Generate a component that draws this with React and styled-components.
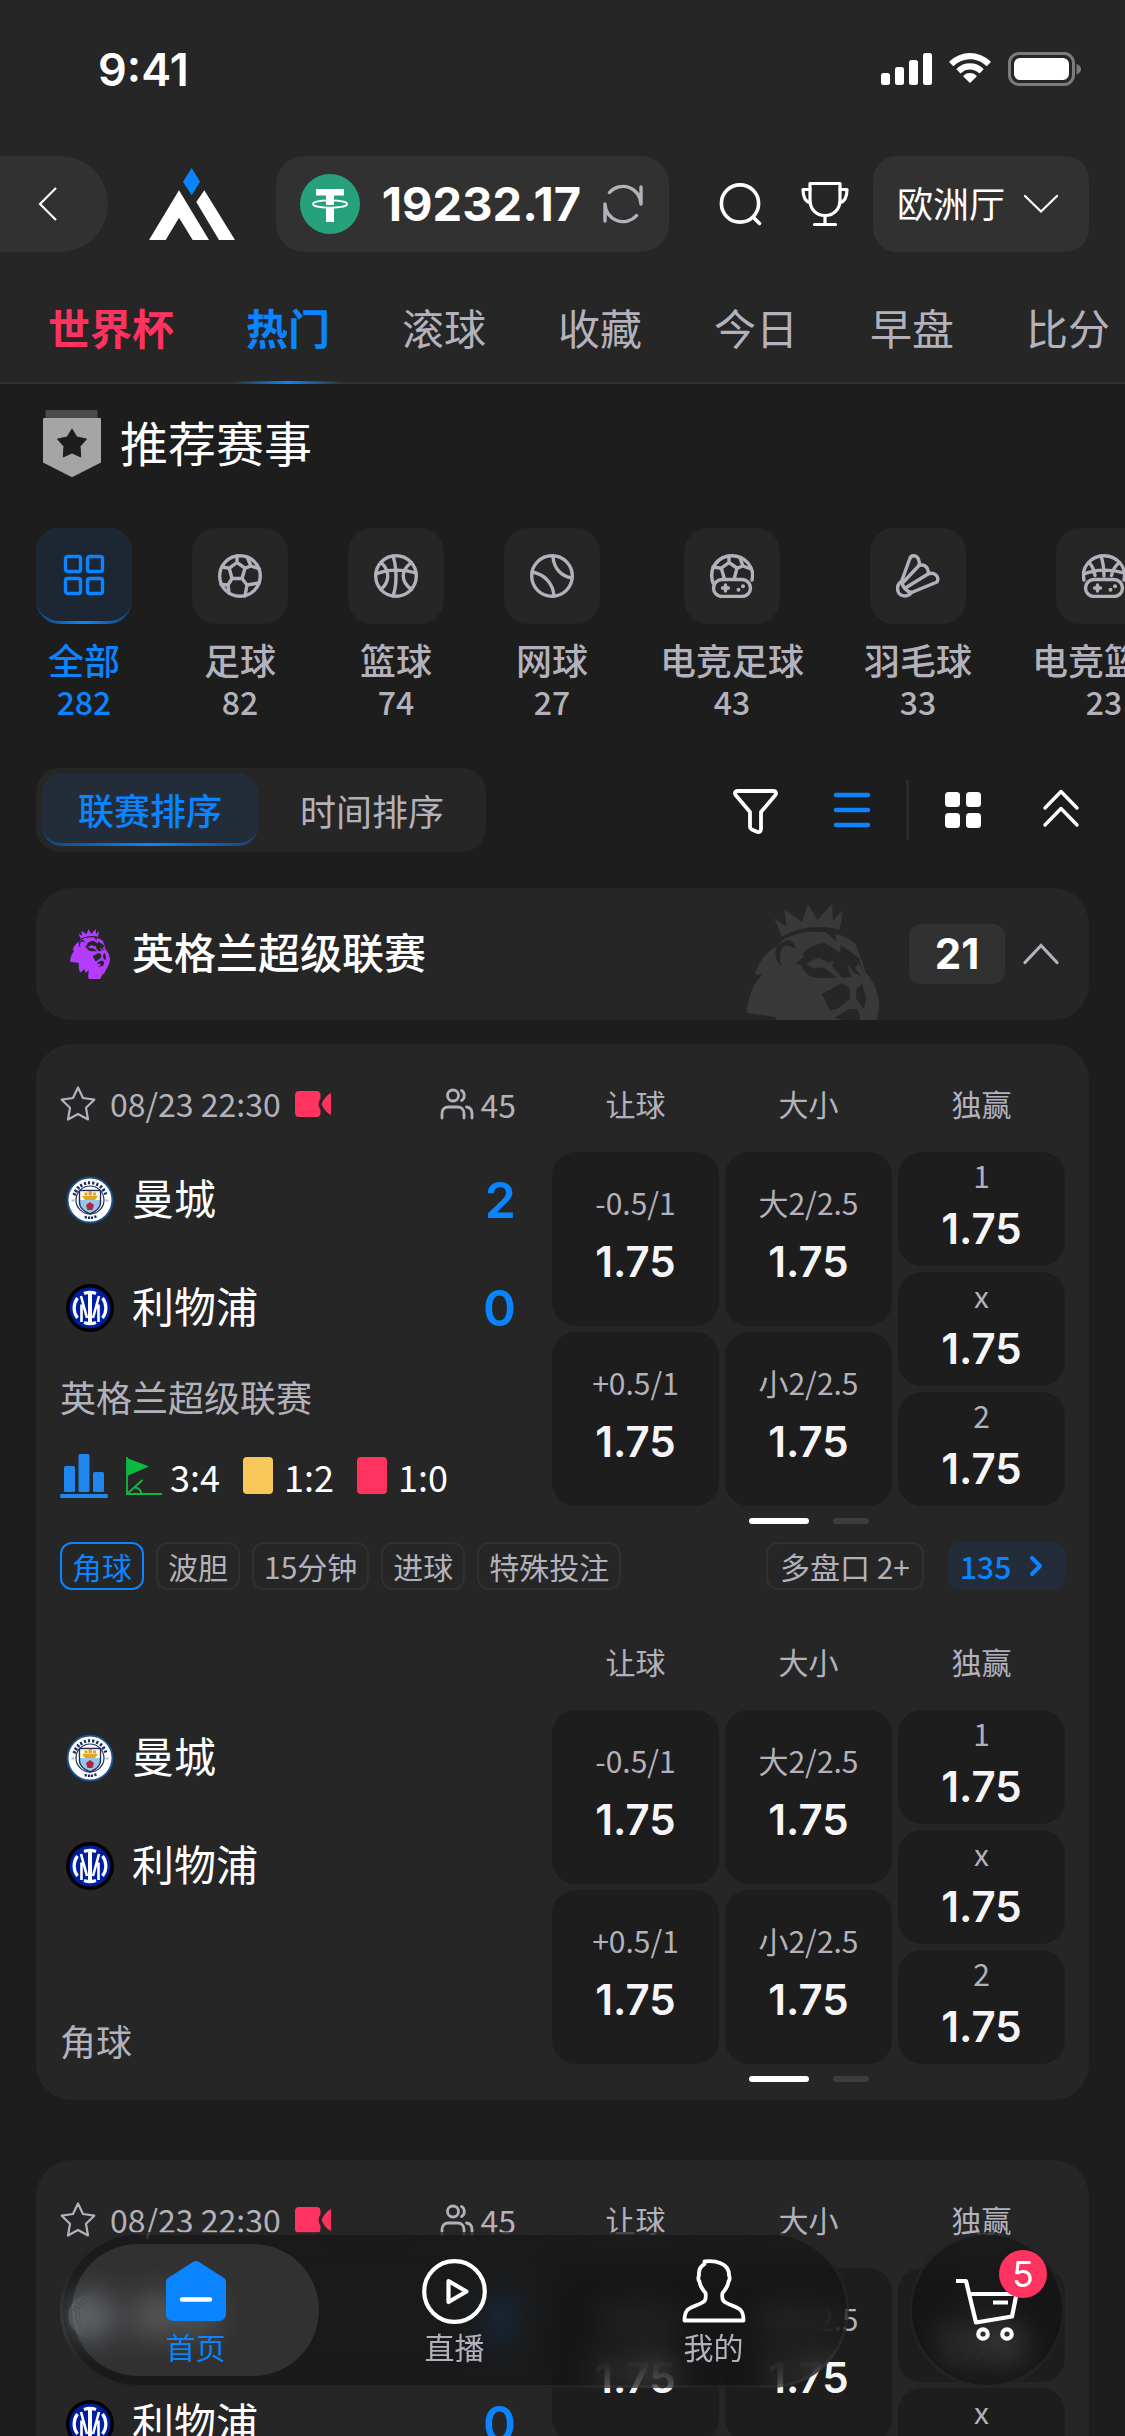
import { useState } from 'react';
import styled, { createGlobalStyle, css } from 'styled-components';

// colors
const BLUE = '#0a84ff';
const PINK = '#ff335f';
const GRAY = '#b3b2bc';
const CARD = '#262626';
const PAGE = '#1d1d1d';
const LIFTED = '#313131';

const GlobalStyle = createGlobalStyle`
    * {
        box-sizing: border-box;
    }
    body {
        margin: 0;
        background: ${PAGE};
        color: #fff;
        font-family: "Noto Sans CJK SC", "Noto Sans", sans-serif;
    }
    button, select {
        margin: 0;
        padding: 0;
        border: 0;
        background: none;
        color: inherit;
        font: inherit;
        cursor: pointer;
    }
    svg {
        display: block;
        flex: none;
    }
`;

// 숫자용 폰트
const digits = css`
    font-family: Inter, "Liberation Sans", sans-serif;
`;

const tabs = ['世界杯', '热门', '滚球', '收藏', '今日', '早盘', '比分'];

const sports = [
    { name: '全部', count: 282, icon: AllIcon },
    { name: '足球', count: 82, icon: SoccerIcon },
    { name: '篮球', count: 74, icon: BasketballIcon },
    { name: '网球', count: 27, icon: TennisIcon },
    { name: '电竞足球', count: 43, icon: ESoccerIcon },
    { name: '羽毛球', count: 33, icon: BadmintonIcon },
    { name: '电竞篮球', count: 23, icon: EBasketballIcon },
];

const columns = [
    { title: '让球', odds: [['-0.5/1', '1.75'], ['+0.5/1', '1.75']] },
    { title: '大小', odds: [['大2/2.5', '1.75'], ['小2/2.5', '1.75']] },
    { title: '独赢', odds: [['1', '1.75'], ['x', '1.75'], ['2', '1.75']] },
];

const chips = ['角球', '波胆', '15分钟', '进球', '特殊投注'];

const navItems = [
    { name: '首页', icon: HomeIcon },
    { name: '直播', icon: LiveIcon },
    { name: '我的', icon: UserIcon },
];

export default function App() {
    return (
        <>
            <GlobalStyle />
            <Screen>
                <Header />
                <Content>
                    <SectionTitle>
                        <BadgeIcon />
                        推荐赛事
                    </SectionTitle>
                    <Sports />
                    <SortBar />
                    <League />
                    <MatchCard />
                    <MatchCard />
                </Content>
                <BottomBar />
            </Screen>
        </>
    );
}

const Screen = styled.div`
    position: relative;
    display: flex;
    flex-direction: column;
    height: 100vh;
    overflow: hidden;
`;

const Content = styled.main`
    flex: 1;
    min-height: 0;
    overflow-x: hidden;
    overflow-y: auto;
    scrollbar-width: none;
    padding: 24px 0 0 36px;
`;

const SectionTitle = styled.h1`
    display: flex;
    align-items: flex-start;
    gap: 12px;
    height: 72px;
    margin: 0;
    font-size: 48px;
    font-weight: 400;
    line-height: 66px;
`;

/* ---------- header ---------- */

const Top = styled.header`
    background: ${CARD};
`;

const StatusBar = styled.div`
    ${digits}
    display: flex;
    align-items: center;
    justify-content: space-between;
    height: 138px;
    padding: 0 44px 0 98px;
    font-size: 45px;
    font-weight: 600;
`;

const Toolbar = styled.div`
    display: flex;
    align-items: center;
    height: 96px;
    margin-top: 18px;
    padding-right: 36px;
`;

const BackButton = styled.button`
    display: flex;
    align-items: center;
    width: 108px;
    height: 96px;
    padding-left: 36px;
    border-radius: 0 48px 48px 0;
    background: ${LIFTED};
`;

const LogoLink = styled.a`
    margin: 0 40px;
`;

const Wallet = styled.div`
    display: flex;
    flex: 1;
    align-items: center;
    justify-content: space-between;
    height: 96px;
    padding: 0 26px 0 24px;
    border-radius: 28px;
    background: ${LIFTED};
`;

const Balance = styled.span`
    ${digits}
    font-size: 47px;
    font-weight: 700;
    line-height: 72px;
`;

const Tools = styled.div`
    display: flex;
    gap: 36px;
    margin: 0 24px 0 48px;
`;

const HallBox = styled.label`
    display: flex;
    align-items: center;
    justify-content: space-between;
    width: 216px;
    height: 96px;
    padding: 0 30px 0 24px;
    border-radius: 24px;
    background: ${LIFTED};
`;

const HallSelect = styled.select`
    appearance: none;
    outline: none;
    width: 112px;
    padding-bottom: 4px;
    font-size: 36px;
    line-height: 52px;
`;

const Tabs = styled.nav`
    display: flex;
    gap: 72px;
    height: 110px;
    margin-top: 22px;
    padding-left: 48px;
    box-shadow: inset 0 -2px #333;
    overflow: hidden;
`;

const Tab = styled.button`
    position: relative;
    flex: none;
    padding-bottom: 4px;
    font-size: 42px;
    line-height: 106px;
    color: ${props => (props.$hot ? PINK : props.$active ? BLUE : GRAY)};
    font-weight: ${props => (props.$hot || props.$active ? 700 : 400)};

    ${props => props.$active && css`
        &::after {
            content: '';
            position: absolute;
            left: -12px;
            right: -12px;
            bottom: 0;
            height: 3px;
            background: linear-gradient(90deg, transparent, ${BLUE}, transparent);
        }
    `}
`;

function Header() {
    const [active, setActive] = useState('热门');

    return (
        <Top>
            <StatusBar>
                <span>9:41</span>
                <StatusIcons />
            </StatusBar>
            <Toolbar>
                <BackButton aria-label="返回">
                    <svg width="24" height="36" viewBox="0 0 24 36" fill="none" stroke="#fff" strokeWidth="2.2">
                        <path d="M20 2 4 18l16 16" />
                    </svg>
                </BackButton>
                <LogoLink href="#" aria-label="主页">
                    <Logo />
                </LogoLink>
                <Wallet>
                    <CoinIcon />
                    <Balance>19232.17</Balance>
                    <button aria-label="刷新"><RefreshIcon /></button>
                </Wallet>
                <Tools>
                    <button aria-label="搜索">
                        <svg width="48" height="48" viewBox="0 0 48 48" fill="none" stroke="#fff" strokeWidth="3.6" strokeLinecap="round">
                            <circle cx="23" cy="23.5" r="18.6" />
                            <path d="m36.5 37.5 6 6" />
                        </svg>
                    </button>
                    <button aria-label="奖杯"><TrophyIcon /></button>
                </Tools>
                <HallBox>
                    <HallSelect aria-label="大厅" defaultValue="欧洲厅">
                        <option>欧洲厅</option>
                        <option>亚洲厅</option>
                    </HallSelect>
                    <svg width="36" height="20" viewBox="0 0 36 20" fill="none" stroke="#fff" strokeWidth="2.2" strokeLinecap="round">
                        <path d="m2 2 16 15.500L34 2" />
                    </svg>
                </HallBox>
            </Toolbar>
            <Tabs>
                {tabs.map((name, i) => (
                    <Tab key={name} $hot={i === 0} $active={name === active} onClick={() => setActive(name)}>
                        {name}
                    </Tab>
                ))}
            </Tabs>
        </Top>
    );
}

/* ---------- sports ---------- */

const SportList = styled.div`
    display: flex;
    gap: 60px;
    margin-top: 48px;
    padding-bottom: 10px;
    overflow: hidden;
`;

// 선택된 타일 아래쪽의 그라데이션 라인
const glowLine = fill => css`
    border-bottom: 3px solid transparent;
    background:
        linear-gradient(${fill}, ${fill}) padding-box,
        linear-gradient(90deg, #15456f, ${BLUE}, #15456f) border-box;
`;

const SportTile = styled.span`
    display: flex;
    align-items: center;
    justify-content: center;
    width: 96px;
    height: 96px;
    margin-bottom: 14px;
    border-radius: 24px;
    background: ${CARD};
    ${props => props.$active && glowLine('#1c2733')}
`;

const SportButton = styled.button`
    display: flex;
    flex: none;
    flex-direction: column;
    align-items: center;
    font-size: 36px;
    font-weight: 500;
    line-height: 42px;
    color: ${props => (props.$active ? BLUE : GRAY)};
`;

const SportCount = styled.span`
    font-size: 32px;
    line-height: 42px;
`;

function Sports() {
    const [active, setActive] = useState('全部');

    return (
        <SportList>
            {sports.map(({ name, count, icon: Icon }) => (
                <SportButton key={name} $active={name === active} onClick={() => setActive(name)}>
                    <SportTile $active={name === active}><Icon /></SportTile>
                    <span>{name}</span>
                    <SportCount>{count}</SportCount>
                </SportButton>
            ))}
        </SportList>
    );
}

/* ---------- sorting ---------- */

const SortRow = styled.div`
    display: flex;
    align-items: center;
    justify-content: space-between;
    margin: 36px 40px 0 0;
`;

const Segment = styled.div`
    display: flex;
    gap: 6px;
    padding: 6px;
    border-radius: 24px;
    background: ${CARD};
`;

const SegmentButton = styled.button`
    width: 216px;
    height: 72px;
    border-radius: 20px;
    font-size: 36px;
    line-height: 66px;
    color: ${props => (props.$active ? BLUE : GRAY)};
    font-weight: ${props => (props.$active ? 500 : 400)};
    ${props => props.$active && glowLine('#232d3a')}
`;

const ViewTools = styled.div`
    display: flex;
    align-items: center;
    gap: 50px;
`;

const ViewPair = styled.div`
    display: flex;
    align-items: center;
    gap: 30px;
`;

const Divider = styled.span`
    width: 3px;
    height: 60px;
    background: #2a2a2a;
`;

function SortBar() {
    const [sort, setSort] = useState('联赛排序');

    return (
        <SortRow>
            <Segment>
                {['联赛排序', '时间排序'].map(name => (
                    <SegmentButton key={name} $active={name === sort} onClick={() => setSort(name)}>
                        {name}
                    </SegmentButton>
                ))}
            </Segment>
            <ViewTools>
                <button aria-label="筛选">
                    <svg width="48" height="48" viewBox="0 0 48 48" fill="none" stroke="#fff" strokeWidth="3.8" strokeLinejoin="round">
                        <path d="M7.500 5h36c2.400 0 3.200 2.600 1.700 4.300L31 26v17c0 2.600-2 3.600-4 2.800l-5.200-2.300c-1.200-.6-1.800-1.400-1.800-2.800V26L5.800 9.300C4.300 7.600 5.100 5 7.500 5Z" />
                    </svg>
                </button>
                <ViewPair>
                    <button aria-label="列表">
                        <svg width="48" height="48" viewBox="0 0 48 48" stroke={BLUE} strokeWidth="4.400" strokeLinecap="round">
                            <path d="M8 9h32M8 24h32M8 39h32" />
                        </svg>
                    </button>
                    <Divider />
                    <button aria-label="网格">
                        <svg width="48" height="48" viewBox="0 0 48 48" fill="#fff">
                            <rect x="6" y="6" width="15" height="15" rx="3.500" />
                            <rect x="27" y="6" width="15" height="15" rx="3.500" />
                            <rect x="6" y="27" width="15" height="15" rx="3.500" />
                            <rect x="27" y="27" width="15" height="15" rx="3.500" />
                        </svg>
                    </button>
                </ViewPair>
                <button aria-label="收起全部">
                    <svg width="48" height="48" viewBox="0 0 48 48" fill="none" stroke="#fff" strokeWidth="3.400" strokeLinecap="round" strokeLinejoin="round">
                        <path d="M8 22 24 5.500 40 22M8 39l16-16.500L40 39" />
                    </svg>
                </button>
            </ViewTools>
        </SortRow>
    );
}

/* ---------- league ---------- */

const LeagueCard = styled.section`
    display: flex;
    align-items: center;
    height: 132px;
    margin: 36px 36px 0 0;
    padding: 0 30px 0 34px;
    border-radius: 36px;
    background: ${CARD};
    overflow: hidden;
`;

const LeagueName = styled.h2`
    flex: 1;
    margin: 0 0 0 22px;
    padding-bottom: 6px;
    font-size: 42px;
    font-weight: 500;
    line-height: 60px;
`;

const Watermark = styled.div`
    align-self: flex-start;
    margin: 16px 30px 0 0;
`;

const LeagueCount = styled.span`
    ${digits}
    width: 96px;
    margin-right: 18px;
    border-radius: 12px;
    background: ${LIFTED};
    font-size: 42px;
    font-weight: 700;
    line-height: 60px;
    text-align: center;
`;

function League() {
    return (
        <LeagueCard>
            <Lion width={40} color="#b43cff" />
            <LeagueName>英格兰超级联赛</LeagueName>
            <Watermark><Lion width={132} color="#393939" /></Watermark>
            <LeagueCount>21</LeagueCount>
            <button aria-label="收起">
                <svg width="36" height="22" viewBox="0 0 36 22" fill="none" stroke={GRAY} strokeWidth="3.200" strokeLinecap="round">
                    <path d="M2 19.500 18 2.500l16 17" />
                </svg>
            </button>
        </LeagueCard>
    );
}

/* ---------- match ---------- */

const Card = styled.article`
    margin: 24px 36px 60px 0;
    padding: 36px 24px 0;
    border-radius: 36px;
    background: ${CARD};

    & + & {
        margin-top: 0;
    }
`;

const Market = styled.section`
    display: grid;
    grid-template-columns: 456fr 513fr;
    column-gap: 36px;
`;

const Side = styled.div`
    display: grid;
    grid-template-rows: 48px 354px;
    row-gap: 24px;
`;

const Meta = styled.div`
    display: flex;
    align-items: center;
    font-size: 32px;
    line-height: 48px;
    color: ${GRAY};
`;

const Time = styled.time`
    margin: 0 14px;
    padding-bottom: 2px;
`;

const Viewers = styled.span`
    display: flex;
    align-items: center;
    gap: 6px;
    margin-left: auto;
`;

const Teams = styled.div`
    display: flex;
    flex-direction: column;
`;

const TeamRow = styled.div`
    display: flex;
    align-items: center;
    gap: 18px;
    height: 96px;
    margin-bottom: 12px;
    padding-left: 6px;
`;

const TeamName = styled.span`
    padding-bottom: 6px;
    font-size: 42px;
    line-height: 60px;
`;

const Score = styled.strong`
    ${digits}
    margin-left: auto;
    font-size: 50px;
    font-weight: 600;
    line-height: 60px;
    color: ${BLUE};
`;

const Competition = styled.div`
    margin-top: ${props => (props.$last ? 'auto' : '4px')};
    font-size: 36px;
    line-height: 48px;
    color: ${GRAY};
`;

const Stats = styled.div`
    display: flex;
    align-items: center;
    height: 48px;
    margin-top: 32px;
    font-size: 36px;
    line-height: 48px;
`;

const Stat = styled.span`
    display: flex;
    align-items: center;
    gap: 8px;
    margin-right: 20px;
`;

const ChartLink = styled.button`
    margin-right: 18px;
`;

const OddsHead = styled.div`
    display: grid;
    grid-template-columns: repeat(3, 1fr);
    gap: 6px;
    font-size: 30px;
    line-height: 46px;
    text-align: center;
    color: ${GRAY};
`;

const OddsGrid = styled.div`
    display: grid;
    grid-template-columns: repeat(3, 1fr);
    grid-template-rows: 100%;
    gap: 6px;
`;

const OddsColumn = styled.div`
    display: flex;
    flex-direction: column;
    gap: 6px;
    min-height: 0;
`;

const Odd = styled.button`
    display: flex;
    flex: 1 1 0;
    flex-direction: column;
    align-items: center;
    justify-content: center;
    gap: ${props => (props.$tight ? '2px' : '8px')};
    min-height: 0;
    padding-bottom: 6px;
    border-radius: 24px;
    background: ${PAGE};
`;

const OddLabel = styled.span`
    font-size: 30px;
    line-height: 44px;
    color: ${GRAY};
`;

const OddValue = styled.span`
    ${digits}
    font-size: 42px;
    font-weight: 600;
    line-height: 60px;
    color: #f5f5f7;
`;

const Pager = styled.div`
    display: flex;
    justify-content: center;
    gap: 24px;
    padding: 12px 0 18px;
`;

const Dot = styled.span`
    width: ${props => (props.$active ? '60px' : '36px')};
    height: 6px;
    border-radius: 3px;
    background: ${props => (props.$active ? '#fff' : '#3d3d3d')};
`;

const ChipRow = styled.div`
    display: flex;
    gap: 12px;
    margin-bottom: 48px;
`;

const Chip = styled.button`
    height: 48px;
    padding: 0 ${props => (props.$wide ? '12px' : '10px')};
    border: 2px solid ${props => (props.$active ? BLUE : '#303030')};
    border-radius: 12px;
    font-size: 30px;
    line-height: 42px;
    white-space: nowrap;
    color: ${props => (props.$active ? BLUE : GRAY)};
`;

const MultiChip = styled(Chip)`
    margin-left: auto;
`;

const MoreLink = styled.a`
    display: flex;
    align-items: center;
    justify-content: space-between;
    width: 117px;
    height: 48px;
    margin-left: 12px;
    padding: 0 22px 0 12px;
    border-radius: 12px;
    background: #232d3a;
    font-size: 30px;
    font-weight: 500;
    line-height: 44px;
    text-decoration: none;
    color: ${BLUE};
`;

function MarketOdds() {
    return (
        <div>
            <Side>
                <OddsHead>
                    {columns.map(({ title }) => <span key={title}>{title}</span>)}
                </OddsHead>
                <OddsGrid>
                    {columns.map(({ title, odds }) => (
                        <OddsColumn key={title}>
                            {odds.map(([label, value]) => (
                                <Odd key={label} $tight={odds.length > 2}>
                                    <OddLabel>{label}</OddLabel>
                                    <OddValue>{value}</OddValue>
                                </Odd>
                            ))}
                        </OddsColumn>
                    ))}
                </OddsGrid>
            </Side>
            <Pager>
                <Dot $active />
                <Dot />
            </Pager>
        </div>
    );
}

function MatchCard() {
    const [chip, setChip] = useState('角球');

    return (
        <Card>
            <Market>
                <Side>
                    <Meta>
                        <button aria-label="收藏"><StarIcon /></button>
                        <Time>08/23 22:30</Time>
                        <CameraIcon />
                        <Viewers><ViewersIcon />45</Viewers>
                    </Meta>
                    <Teams>
                        <TeamRow><CityCrest /><TeamName>曼城</TeamName><Score>2</Score></TeamRow>
                        <TeamRow><InterCrest /><TeamName>利物浦</TeamName><Score>0</Score></TeamRow>
                        <Competition>英格兰超级联赛</Competition>
                        <Stats>
                            <ChartLink aria-label="数据"><ChartIcon /></ChartLink>
                            <Stat><CornerIcon />3:4</Stat>
                            <Stat><BookingIcon color="#f7c859" />1:2</Stat>
                            <Stat><BookingIcon color={PINK} />1:0</Stat>
                        </Stats>
                    </Teams>
                </Side>
                <MarketOdds />
            </Market>
            <ChipRow>
                {chips.map(name => (
                    <Chip key={name} $active={name === chip} onClick={() => setChip(name)}>{name}</Chip>
                ))}
                <MultiChip $wide>多盘口 2+</MultiChip>
                <MoreLink href="#">
                    135
                    <svg width="14" height="22" viewBox="0 0 14 22" fill="none" stroke={BLUE} strokeWidth="4" strokeLinecap="round" strokeLinejoin="round">
                        <path d="m3 3 8 8-8 8" />
                    </svg>
                </MoreLink>
            </ChipRow>
            <Market>
                <Side>
                    <Meta />
                    <Teams>
                        <TeamRow><CityCrest /><TeamName>曼城</TeamName></TeamRow>
                        <TeamRow><InterCrest /><TeamName>利物浦</TeamName></TeamRow>
                        <Competition $last>角球</Competition>
                    </Teams>
                </Side>
                <MarketOdds />
            </Market>
        </Card>
    );
}

/* ---------- bottom bar ---------- */

const Bottom = styled.div`
    position: absolute;
    left: 60px;
    right: 60px;
    bottom: 48px;
    display: flex;
    gap: 60px;
`;

const glass = css`
    height: 156px;
    border: 3px solid rgba(255, 255, 255, 0.05);
    border-radius: 78px;
    background: rgba(14, 14, 14, 0.5);
    backdrop-filter: blur(16px);
`;

const Nav = styled.nav`
    ${glass}
    display: flex;
    flex: 1;
    gap: 12px;
    padding: 9px;
`;

const NavLink = styled.a`
    display: flex;
    flex: 1;
    flex-direction: column;
    align-items: center;
    padding-top: 14px;
    border-radius: 66px;
    background: ${props => (props.$active ? 'rgba(255, 255, 255, 0.1)' : 'none')};
    color: ${props => (props.$active ? BLUE : GRAY)};
    font-size: 30px;
    line-height: 44px;
    text-decoration: none;
`;

const NavIcon = styled.span`
    display: flex;
    align-items: center;
    justify-content: center;
    height: 66px;
`;

const CartButton = styled.button`
    ${glass}
    position: relative;
    display: flex;
    align-items: center;
    justify-content: center;
    width: 156px;
`;

const CartBadge = styled.span`
    ${digits}
    position: absolute;
    top: 15px;
    right: 15px;
    width: 48px;
    height: 48px;
    border-radius: 24px;
    background: ${PINK};
    font-size: 36px;
    line-height: 48px;
`;

function BottomBar() {
    return (
        <Bottom>
            <Nav>
                {navItems.map(({ name, icon: Icon }, i) => (
                    <NavLink key={name} href="#" $active={i === 0}>
                        <NavIcon><Icon /></NavIcon>
                        {name}
                    </NavLink>
                ))}
            </Nav>
            <CartButton aria-label="购物车">
                <CartIcon />
                <CartBadge>5</CartBadge>
            </CartButton>
        </Bottom>
    );
}

/* ---------- icons ---------- */

function StatusIcons() {
    return (
        <svg width="200" height="34" viewBox="0 0 200 34" fill="#fff">
            <rect x="0" y="21" width="9" height="12" rx="2.500" />
            <rect x="14" y="15" width="9" height="18" rx="2.500" />
            <rect x="28" y="8" width="9" height="25" rx="2.500" />
            <rect x="42" y="1" width="9" height="32" rx="2.500" />
            <path d="M89 7.200c6 0 11.700 2.300 16 6.500.4.300.9.300 1.200 0l3.200-3.200c.4-.4.4-1 0-1.300a29.500 29.500 0 0 0-40.800 0c-.4.300-.4.900 0 1.300l3.200 3.200c.3.300.8.300 1.200 0A23 23 0 0 1 89 7.200Z" />
            <path d="M89 17.600c3.300 0 6.400 1.200 8.800 3.400.4.300.9.300 1.200 0l3.200-3.200c.4-.4.4-1 0-1.300a19.300 19.300 0 0 0-26.400 0c-.4.300-.4.900 0 1.300l3.200 3.200c.3.300.8.300 1.200 0a13 13 0 0 1 8.800-3.400Z" />
            <path d="M95.400 24.700c.4-.4.400-1 0-1.300a9.900 9.900 0 0 0-12.800 0c-.4.300-.4.900 0 1.300l5.800 5.900c.3.300.9.300 1.200 0Z" />
            <rect x="128.500" y="1.500" width="64" height="31" rx="9.500" fill="none" stroke="#fff" strokeOpacity=".4" strokeWidth="3" />
            <rect x="133" y="6" width="55" height="22" rx="6" />
            <path d="M195.500 12c3 1 4.500 2.800 4.500 5.200s-1.500 4.200-4.500 5.200Z" opacity=".4" />
        </svg>
    );
}

function Logo() {
    return (
        <svg width="88" height="72" viewBox="0 0 88 72">
            <path d="m43.700 0 8.300 13.700-8.300 13.600L35 13.700Z" fill={BLUE} />
            <path d="m31 22.300 30 49.700H44.700L31 49.700 17.700 72H1ZM56.300 22.300 87 72H71L48.300 34Z" fill="#fff" />
        </svg>
    );
}

function CoinIcon() {
    return (
        <svg width="60" height="60" viewBox="0 0 60 60">
            <circle cx="30" cy="30" r="30" fill="#26a17b" />
            <path d="M16 15h28v6.500H34v9.500h-8v-9.500H16ZM26 34h8v14h-8Z" fill="#fff" />
            <ellipse cx="30" cy="30" rx="17" ry="3.600" fill="none" stroke="#fff" strokeWidth="1.800" />
        </svg>
    );
}

function RefreshIcon() {
    return (
        <svg width="40" height="40" viewBox="0 0 40 40" fill="none" stroke={GRAY} strokeWidth="3.400" strokeLinecap="round" strokeLinejoin="round">
            <path d="M6.500 8.500A18 18 0 0 1 38 20V3" />
            <path d="M33.500 31.500A18 18 0 0 1 2 20v17" />
        </svg>
    );
}

function TrophyIcon() {
    return (
        <svg width="48" height="48" viewBox="0 0 48 48" fill="none" stroke="#fff" strokeWidth="3.200" strokeLinecap="round" strokeLinejoin="round">
            <path d="M9 3.500h30V20c0 9-6 15.500-15 15.500S9 29 9 20ZM24 35.500v9M13.500 44.500h21" />
            <path d="M9 9.500H2c0 7 1.500 12 7.500 13.500M39 9.500h7c0 7-1.500 12-7.500 13.500" />
        </svg>
    );
}

function BadgeIcon() {
    return (
        <svg width="72" height="72" viewBox="0 0 72 72">
            <path d="M11 2h49a1.500 1.500 0 0 1 1.500 1.500V12h-52V3.500A1.500 1.500 0 0 1 11 2Z" fill="#4b4b4b" />
            <path d="M8.500 10h55c1 0 1.500.5 1.500 1.500v43L37.500 68.500c-1 .5-2 .5-3 0L7 54.500v-43c0-1 .5-1.500 1.500-1.500Z" fill="#a5a5a5" />
            <path d="m36 21 4.800 8 9.700 2-6.500 7.500.8 10.500-8.800-4-8.800 4 .8-10.500-6.500-7.500 9.700-2Z" fill={PAGE} stroke={PAGE} strokeLinejoin="round" />
        </svg>
    );
}

const LineSvg = styled.svg.attrs({ viewBox: '0 0 44 44', width: 44, height: 44 })`
    fill: none;
    stroke: currentColor;
    stroke-width: 3.4;
    stroke-linecap: round;
    stroke-linejoin: round;
`;

function AllIcon() {
    return (
        <LineSvg>
            <rect x="3.500" y="3.500" width="15" height="15" rx="2" />
            <rect x="25.500" y="3.500" width="15" height="15" rx="2" />
            <rect x="3.500" y="25.500" width="15" height="15" rx="2" />
            <rect x="25.500" y="25.500" width="15" height="15" rx="2" />
        </LineSvg>
    );
}

function SoccerIcon() {
    return (
        <LineSvg>
            <circle cx="22" cy="22" r="20.300" />
            <path d="m19 8.500 8 5.700-3 10.300H14l-2.700-10.300ZM19 8.500V2M11.300 14.200 4 13M27 14.200l6-2.200 8.500 3M33 12l-3.500-8M14 24.500 10 31l-7-.5M10 31l1 8M24 24.500l5 6.500 12-2M29 31l-2 11" />
        </LineSvg>
    );
}

function BasketballIcon() {
    return (
        <LineSvg>
            <circle cx="22" cy="22" r="20.300" />
            <path d="M19 2c4 12 4 29 0 40M2 20c12-5 28-5 40-1M7 8.500c9 8 9 19 0 27M37.500 8.500c-11 8-11 19 0 27" />
        </LineSvg>
    );
}

function TennisIcon() {
    return (
        <LineSvg>
            <circle cx="22" cy="22" r="20.300" />
            <path d="M23 2c.5 12 8 20.500 19 22M2 18c12 2 21 11 22 24" />
        </LineSvg>
    );
}

// 게임패드 (电竞 아이콘 공통)
function Gamepad() {
    return (
        <>
            <rect x="3.500" y="25.500" width="37" height="17" rx="8.500" />
            <path d="M12.500 34h6M15.500 31v6" />
            <circle cx="28.500" cy="35.700" r="2" fill="currentColor" stroke="none" />
            <circle cx="33" cy="32.300" r="2" fill="currentColor" stroke="none" />
        </>
    );
}

function ESoccerIcon() {
    return (
        <LineSvg>
            <path d="M3 29C-2 13 9 1.700 22 1.700S45 13 42 26" />
            <path d="m19 8.500 8 5.700-2.500 9.300M14 23.500l-2.700-9.300L19 8.500V2M11.300 14.200 3 13M27 14.200l6-2.200 8 3M33 12l-3-8" />
            <Gamepad />
        </LineSvg>
    );
}

function EBasketballIcon() {
    return (
        <LineSvg>
            <path d="M2 26C-1 13 9 1.700 22 1.700S45 13 42 26" />
            <path d="M19 2c2 6 3 13 3 20M2 20c12-5 28-5 40-1M7 8.500c3 3 5 6 6 13M37.500 8.500c-4 3-7 7-8 13" />
            <Gamepad />
        </LineSvg>
    );
}

function BadmintonIcon() {
    return (
        <LineSvg>
            <path d="m5.500 27.500 8-22c1.500-5.500 8-5 9.500 1.500.5 1.500.5 3 0 4.500 6-2 10.500 3 9 8.500 6-2.500 12 2.500 9 8L15.500 38.500" />
            <path d="M5.500 27.500C0 31 .5 38.500 5 41c4 2 8.500.5 10.500-2.500-4.500-1-8.500-5-10-11ZM7.500 28 23 11.500M11 33l21-13" />
        </LineSvg>
    );
}

function Lion({ width, color }) {
    return (
        <svg width={width} height={Math.round(width * 1.26)} viewBox="0 0 132 166" fill={color}>
            <path d="m27 14.300 12.300 8-1.800-16.600 17.300 12L60.900 0l9.400 16L85 0l1 16.700 9.900-10.400L92.600 26c-17-5-39-4-57.300 6.700Z" />
            <path d="M36 36c12-7 28-10 43-7.700L89 37l-.4-7.300c8 2 15 5 20.200 10.300l7.200 20 2 7.700c8 9 14 20 14 33.300 0 12-5 24-13 33l2-2-9 18-3-2-9 17c-10 4-26 4-38 1-4-8-1-20 0-30l-10 10-5-12-14 11c-4-10-5-22-4-32L0 109c0-14 6-29 15-38l-7-.7c4-13 11-22 21.500-28Z" />
            <g fill={CARD}>
                <path d="M29.500 42c-2.500 10-.5 16 5.500 20.300-4-10.300-2-20.300 5-20.700l9 2.700c-1-4.300-4-8-9-8.600Z" />
                <path d="m48 60 9.600-8-2.100-2c4.500-7 14.500-10 22-11L93 48.500l.7-7.500L112 54l5 17-5-12-4 5 6 8-8-4-6-9 4 14-9 1-10-12 2-6-5 2.500-11-5-12 6.500 7 4 11-.5L90 74H70c-10-1-14-8-16-13Z" />
                <path d="m75 90 19.400-10.700 8.600 4.700v11l-13 10-7 1.300ZM109.500 85l5.500-5 4 13-2 12-8-10ZM87 114l14.600-9h8l4 8-4 9-16 4 9-9Z" />
            </g>
        </svg>
    );
}

function StarIcon() {
    return (
        <svg width="36" height="36" viewBox="0 0 36 36" fill="none" stroke={GRAY} strokeWidth="2.200" strokeLinejoin="round">
            <path d="m18 1.500 5 10.500 11.300 1.700-8.300 8 2 11.800-10-5.500-10 5.500 2-11.800-8.300-8L13 12Z" />
        </svg>
    );
}

function CameraIcon() {
    return (
        <svg width="36" height="26" viewBox="0 0 36 26" fill={PINK}>
            <path d="M4 0h17.500a4 4 0 0 1 4 4v3.500c-2.500 4-2.500 7 0 11V22a4 4 0 0 1-4 4H4a4 4 0 0 1-4-4V4a4 4 0 0 1 4-4ZM36 2v22c-4-2-7.500-6-9.500-11C28.500 8 32 4 36 2Z" />
        </svg>
    );
}

function ViewersIcon() {
    return (
        <svg width="34" height="32" viewBox="0 0 34 32" fill="none" stroke={GRAY} strokeWidth="2.800" strokeLinecap="round">
            <circle cx="13" cy="7.500" r="5.500" />
            <path d="M2 30v-4.500c0-4 2.500-6.500 6.500-6.500h9c4 0 6.500 2.500 6.500 6.500V30M21.500 2.500c3.700 1.800 3.700 8.200 0 10M26.500 19c3.500.5 5.500 3 5.500 6.500V30" />
        </svg>
    );
}

function ChartIcon() {
    return (
        <svg width="48" height="44" viewBox="0 0 48 44" fill="#1f86ee">
            <rect x="4" y="12" width="11" height="26" rx="1.500" />
            <rect x="18.500" y="0" width="11" height="38" rx="1.500" />
            <rect x="33" y="18" width="11" height="20" rx="1.500" />
            <rect x="0" y="40" width="48" height="4" rx="1.500" />
        </svg>
    );
}

function CornerIcon() {
    return (
        <svg width="36" height="38" viewBox="0 0 36 38" fill="none" stroke="#0dba3f" strokeWidth="1.800">
            <path d="M1 0v37h35M1 37l15.500-14M9 30.500c4 .5 6 3 6.500 6.500" />
            <path d="m1 1 22 8.500L1 19Z" fill="#0dba3f" stroke="none" />
        </svg>
    );
}

function BookingIcon({ color }) {
    return (
        <svg width="36" height="38" viewBox="0 0 36 38">
            <rect x="3" y="0" width="30" height="37" rx="4" fill={color} />
        </svg>
    );
}

function CityCrest() {
    return (
        <svg width="48" height="48" viewBox="0 0 48 48">
            <circle cx="24" cy="24" r="22.500" fill="#fff" stroke="#1d4f8c" strokeWidth="2" />
            <circle cx="24" cy="24" r="14" fill="#fff" stroke="#1c2c5b" strokeWidth="1.200" />
            <path d="M13.500 14.500h21V27c0 5-4.500 8.500-10.500 11-6-2.500-10.500-6-10.500-11Z" fill="#98c5e9" stroke="#1c2c5b" strokeWidth="1.400" />
            <path d="M14.300 15.300h19.400V24H14.300Z" fill="#fdf6e3" />
            <path d="M16 20h16l-3 4H19ZM18.500 16.500h3v3h-3ZM22.500 15h3.500v4.500h-3.500ZM27 16.500h3v3h-3Z" fill="#e0a526" />
            <path d="m24 26 4 3-1.500 5h-5L20 29Z" fill="#b5243c" />
            <path d="M7 17.500 10 19M8.500 14l3 2M11 10.500l2.500 2.500M14.500 8l1.500 3M18.500 6l1 3M23 5.200v3M27.500 5.500 27 8.500M32 7l-1.500 3M36 9.500 34 12M39 13l-3 2M41 17l-3 1M19.500 40l.5 2.500M23 40.500V43M26 40.500V43M29 39.500l.8 2.500" stroke="#1c2c5b" strokeWidth="2.200" />
            <path d="M5.500 24.500h3M39.500 24.500h3" stroke="#98c5e9" strokeWidth="2" />
        </svg>
    );
}

function InterCrest() {
    return (
        <svg width="48" height="48" viewBox="0 0 48 48" fill="none" stroke="#fff">
            <circle cx="24" cy="24" r="24" fill="#000" stroke="none" />
            <circle cx="24" cy="24" r="20.500" fill="#001ea0" stroke="none" />
            <path d="M18 9.500c4-1.500 8-1.500 12 0M18 38.500c4 1.500 8 1.500 12 0" strokeWidth="3.200" />
            <path d="M24 9v30" strokeWidth="4" />
            <path d="M15.500 38V20.500M32.500 38V20.500M15 12l6 22M33 12l-6 22" strokeWidth="2.600" />
            <path d="M11.500 14c-4.500 6-4.500 14 0 20M36.500 14c4.500 6 4.500 14 0 20" strokeWidth="3.200" />
        </svg>
    );
}

function HomeIcon() {
    return (
        <svg width="60" height="60" viewBox="0 0 60 60">
            <path d="M26.500 1.200a6 6 0 0 1 7 0L58 17a4.500 4.500 0 0 1 2 3.800V53a7 7 0 0 1-7 7H7a7 7 0 0 1-7-7V20.800A4.500 4.500 0 0 1 2 17Z" fill={BLUE} />
            <path d="M16 38.500h28" stroke="#fff" strokeWidth="4.500" strokeLinecap="round" />
        </svg>
    );
}

function LiveIcon() {
    return (
        <svg width="65" height="65" viewBox="0 0 65 65" fill="none" stroke="#fff" strokeWidth="4.200" strokeLinejoin="round">
            <circle cx="32.500" cy="32.500" r="30.300" />
            <path d="m26.500 22 18 10.500-18 10.500Z" />
        </svg>
    );
}

function UserIcon() {
    return (
        <svg width="64" height="64" viewBox="0 0 64 64" fill="none" stroke="#fff" strokeWidth="3.800" strokeLinejoin="round">
            <path d="M22.500 2.500c10-1.500 25 1.500 24.500 14 1 2 1 4-.5 6-.5 5-3 8-6 11.500-.5 3-.5 6 1 8 4 4 12 4.500 17 9 2 2 3 5 3 10.500h-59c0-5.500 1-8.500 3-10.500 5-4.500 13-5 17-9 1.500-2 1.500-5 1-8-3-3.500-5.500-6.500-6-11.500-1.500-2-1.500-4-.5-6-.5-5 1-9 5.500-11.500Z" />
        </svg>
    );
}

function CartIcon() {
    return (
        <svg width="64" height="64" viewBox="0 0 64 64" fill="none" stroke="#fff" strokeWidth="4.200" strokeLinejoin="round">
            <path d="M1 3h10l10 41.500 36-6L61.500 16H14M38 24.500h15" />
            <circle cx="28" cy="56" r="4.700" />
            <circle cx="52" cy="56" r="4.700" />
        </svg>
    );
}
